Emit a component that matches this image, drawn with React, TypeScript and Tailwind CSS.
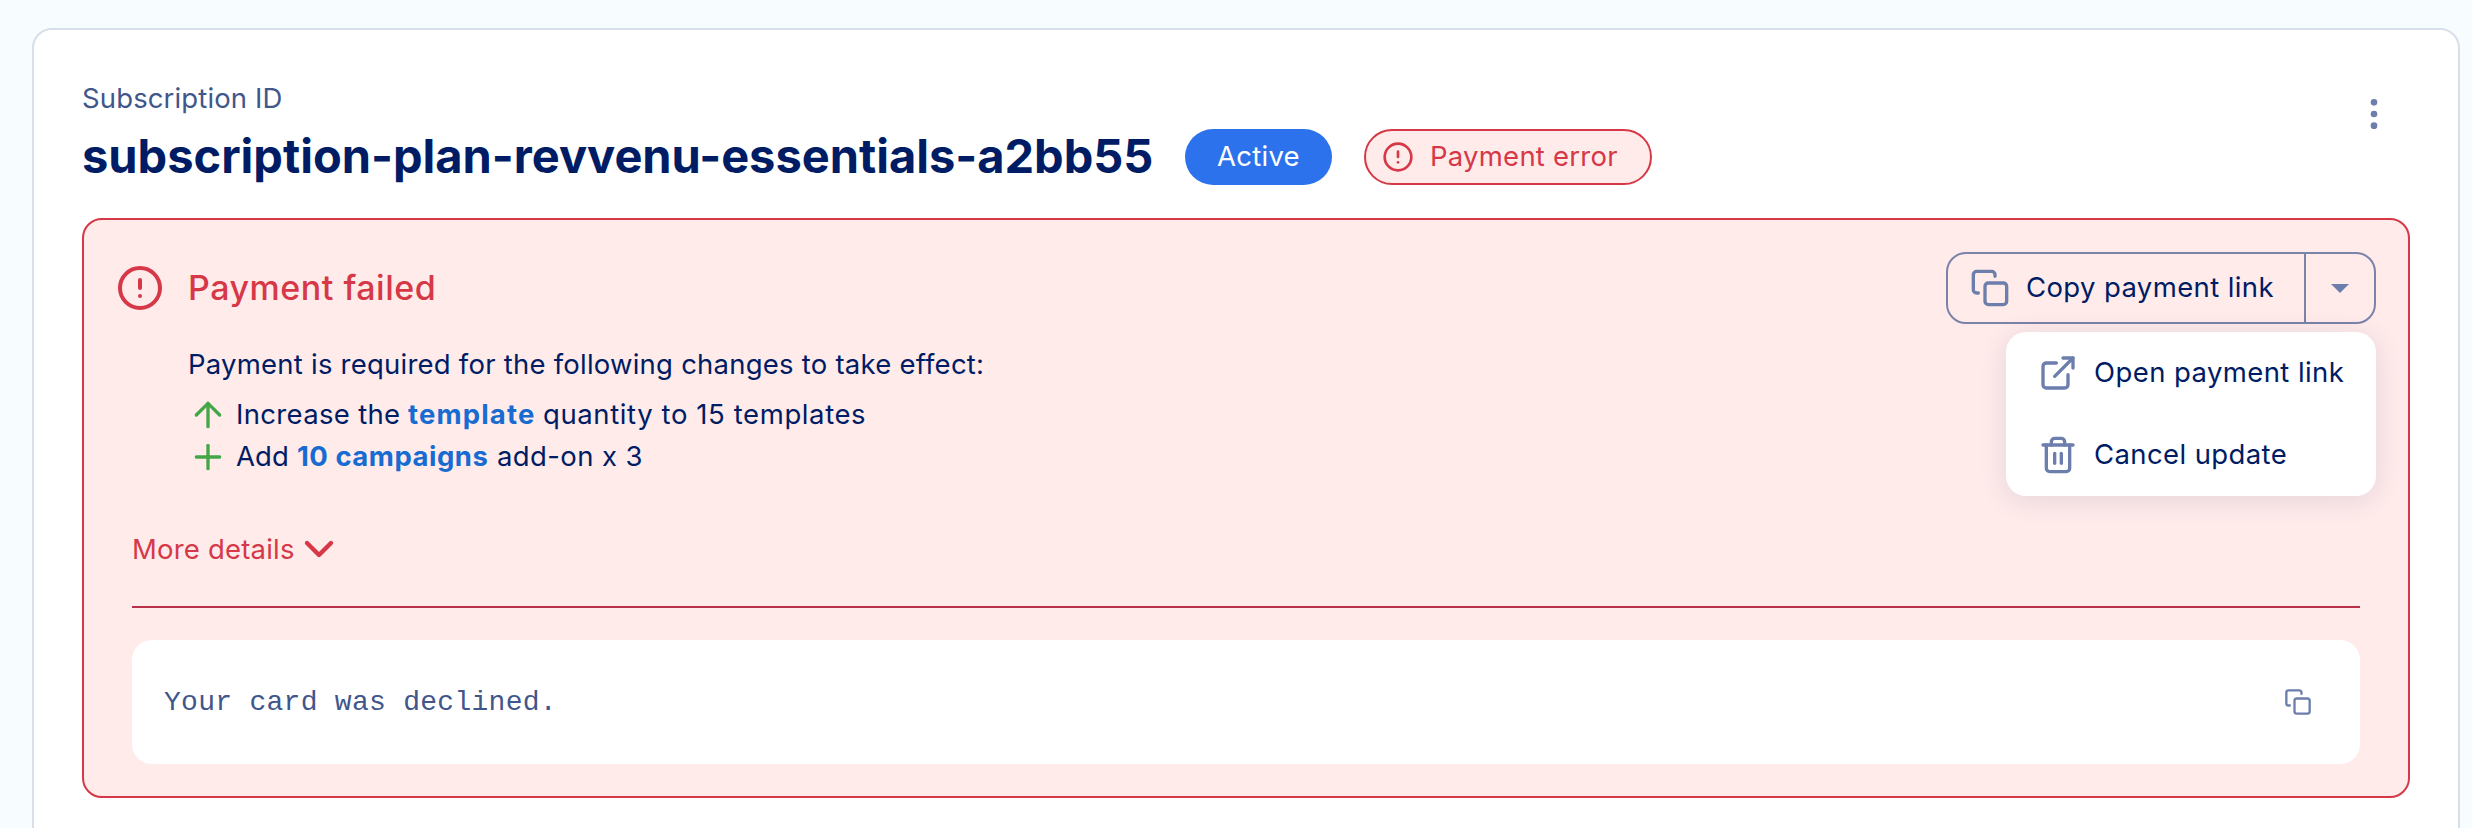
import type { ReactNode } from "react";

type IconProps = { className: string; children: ReactNode };

function Icon({ className, children }: IconProps) {
  return (
    <svg
      viewBox="0 0 24 24"
      fill="none"
      stroke="currentColor"
      strokeWidth="2"
      strokeLinecap="round"
      strokeLinejoin="round"
      className={`shrink-0 ${className}`}
    >
      {children}
    </svg>
  );
}

function AlertIcon({ className }: { className: string }) {
  return (
    <Icon className={className}>
      <circle cx="12" cy="12" r="10" />
      <line x1="12" y1="8" x2="12" y2="12" />
      <line x1="12" y1="16" x2="12.01" y2="16" />
    </Icon>
  );
}

function CopyIcon({ className }: { className: string }) {
  return (
    <Icon className={className}>
      <rect x="9" y="9" width="13" height="13" rx="2" />
      <path d="M5 15H4a2 2 0 0 1-2-2V4a2 2 0 0 1 2-2h9a2 2 0 0 1 2 2v1" />
    </Icon>
  );
}

function Header() {
  return (
    <header className="flex items-start justify-between">
      <div>
        <div className="h-9 leading-9 tracking-[0.13px] text-[#41568b]">Subscription ID</div>
        <div className="mt-[13px] flex h-14 items-center">
          <h1 className="w-[1103px] pb-[2px] text-[47px] leading-[56px] font-bold tracking-[-0.01px] text-[#001c64]">
            subscription-plan-revvenu-essentials-a2bb55
          </h1>
          <span className="flex h-14 w-[147px] items-center justify-center rounded-full bg-[#2c72ec] pb-0.5 tracking-[0.25px] text-white">
            Active
          </span>
          <span className="ml-8 flex h-14 w-72 items-center rounded-full border-2 border-[#d63848] bg-[#ffebea] pl-4 text-[#d63848]">
            <AlertIcon className="size-8" />
            <span className="ml-4 pb-0.5 tracking-[0.24px]">Payment error</span>
          </span>
        </div>
      </div>
      <button type="button" aria-label="More actions" className="mt-3.5 mr-4 text-[#6c7eac]">
        <Icon className="size-10">
          <circle cx="12" cy="5" r="1" />
          <circle cx="12" cy="12" r="1" />
          <circle cx="12" cy="19" r="1" />
        </Icon>
      </button>
    </header>
  );
}

function PaymentActions() {
  return (
    <div className="relative">
      <div className="flex h-[72px] w-[430px] rounded-[20px] border-2 border-[#7b83a9] text-[#6c7eac]">
        <button type="button" className="flex w-[356px] items-center pl-[22px]">
          <CopyIcon className="size-10" />
          <span className="ml-4 pb-0.5 tracking-[0.38px] whitespace-nowrap text-[#001c64]">Copy payment link</span>
        </button>
        <button
          type="button"
          aria-label="More payment actions"
          className="flex flex-1 items-center justify-center border-l-2 border-[#7b83a9]"
        >
          <svg viewBox="0 0 18 9" className="h-[9px] w-[18px]" fill="currentColor">
            <path d="M0 0H18L9 9Z" />
          </svg>
        </button>
      </div>
      <div className="absolute top-20 right-0 flex w-[370px] flex-col rounded-[20px] bg-white text-[#6c7eac] shadow-[0_4px_28px_rgba(0,28,100,0.11)]">
        <button type="button" className="flex h-[82px] items-center gap-4 pl-8">
          <Icon className="size-10">
            <path d="M18 13v6a2 2 0 0 1-2 2H5a2 2 0 0 1-2-2V8a2 2 0 0 1 2-2h6" />
            <polyline points="15 3 21 3 21 9" />
            <line x1="10" y1="14" x2="21" y2="3" />
          </Icon>
          <span className="pb-0.5 tracking-[0.41px] whitespace-nowrap text-[#001c64]">Open payment link</span>
        </button>
        <button type="button" className="flex h-[82px] items-center gap-4 pl-8">
          <Icon className="size-10">
            <polyline points="3 6 5 6 21 6" />
            <path d="M19 6v14a2 2 0 0 1-2 2H7a2 2 0 0 1-2-2V6m3 0V4a2 2 0 0 1 2-2h4a2 2 0 0 1 2 2v2" />
            <line x1="10" y1="11" x2="10" y2="17" />
            <line x1="14" y1="11" x2="14" y2="17" />
          </Icon>
          <span className="pb-0.5 tracking-[0.39px] whitespace-nowrap text-[#001c64]">Cancel update</span>
        </button>
      </div>
    </div>
  );
}

function Changes() {
  return (
    <ul className="mt-2.5 ml-[72px] text-[#001c64]">
      <li className="flex h-[42px] items-center gap-2">
        <Icon className="size-10 text-[#43a647]">
          <line x1="12" y1="19" x2="12" y2="5" />
          <polyline points="5 12 12 5 19 12" />
        </Icon>
        <span className="flex pb-0.5 whitespace-pre">
          <span className="w-[172px] tracking-[0.32px]">Increase the </span>
          <b className="w-[135px] tracking-[1.15px] text-[#186bd0]">template</b>
          <span className="tracking-[0.6px]">quantity to 15 templates</span>
        </span>
      </li>
      <li className="flex h-[42px] items-center gap-2">
        <Icon className="size-10 text-[#43a647]">
          <line x1="12" y1="5" x2="12" y2="19" />
          <line x1="5" y1="12" x2="19" y2="12" />
        </Icon>
        <span className="flex pb-0.5 whitespace-pre">
          <span className="w-[61px] tracking-[0.1px]">Add </span>
          <b className="w-[200px] tracking-[0.5px] text-[#186bd0]">10 campaigns</b>
          <span className="tracking-[0.38px]">add-on x 3</span>
        </span>
      </li>
    </ul>
  );
}

function PaymentAlert() {
  return (
    <section className="mt-[33px] h-[580px] rounded-[20px] border-2 border-[#d63848] bg-[#ffebea] px-8 pt-8">
      <div className="flex h-[72px] items-center justify-between">
        <div className="flex items-center gap-6 text-[#d63848]">
          <AlertIcon className="size-12" />
          <h2 className="text-[34px] leading-10 font-medium tracking-[0.52px]">Payment failed</h2>
        </div>
        <PaymentActions />
      </div>
      <p className="mt-5 ml-[72px] h-10 leading-10 tracking-[0.23px] text-[#001c64]">
        Payment is required for the following changes to take effect:
      </p>
      <Changes />
      <div className="mx-4">
        <button type="button" className="mt-[51px] flex h-10 items-center text-[#d63848]">
          <span className="w-[163px] text-left tracking-[0.2px] whitespace-nowrap">More details</span>
          <Icon className="size-12 stroke-[2.2]">
            <polyline points="6 9 12 15 18 9" />
          </Icon>
        </button>
        <div className="mt-[37px] h-0.5 bg-[#b8304a]" />
        <div className="mt-8 flex h-[124px] items-center justify-between rounded-[20px] bg-white pr-12 pl-8">
          <code className="pt-0.5 font-['Liberation_Mono',monospace] text-[28px] tracking-[0.28px] text-[#41568b]">
            Your card was declined.
          </code>
          <CopyIcon className="size-7 text-[#6c7eac]" />
        </div>
      </div>
    </section>
  );
}

export default function App() {
  return (
    <main className="h-[828px] w-[2472px] overflow-hidden bg-[#f7fcff] pt-7 pl-8 font-['Inter',sans-serif] text-[27.5px] leading-10">
      <article className="h-[900px] w-[2428px] rounded-[20px] border-2 border-[#d8deea] bg-white px-12 pt-[50px]">
        <Header />
        <PaymentAlert />
      </article>
    </main>
  );
}
